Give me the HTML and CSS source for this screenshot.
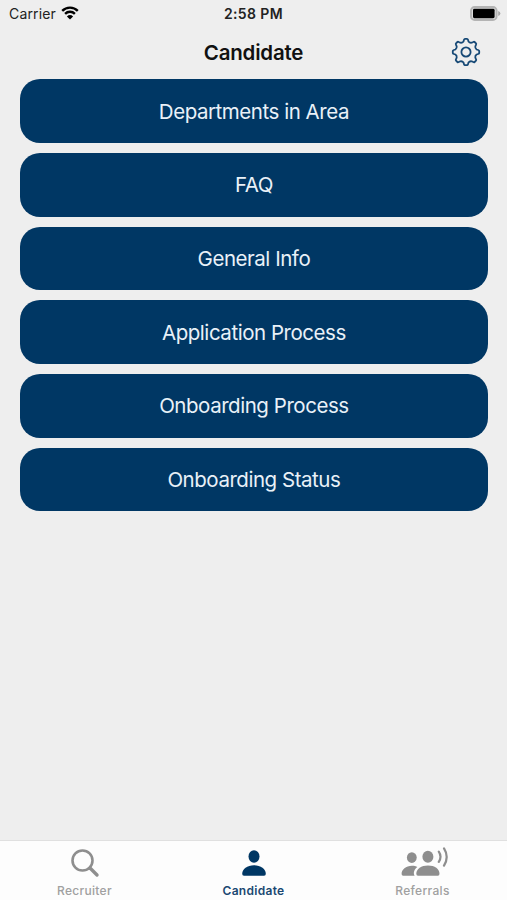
FILE: index.html
```html
<!DOCTYPE html>
<html lang="en">
<head>
  <meta charset="UTF-8">
  <title>Candidate</title>
  <link rel="stylesheet" href="styles.css">
</head>
<body>

  <div class="status-bar">
    <div class="carrier">
      <span>Carrier</span>
      <svg class="wifi" width="18" height="14" viewBox="0 0 18 14">
        <path d="M1.2 4.8a11.2 11.2 0 0 1 15.6 0M4.1 7.8a7 7 0 0 1 9.8 0" fill="none" stroke="#000" stroke-width="2.4"/>
        <path d="M9 13.6 5.9 10.4a4.5 4.5 0 0 1 6.2 0z"/>
      </svg>
    </div>
    <div class="time">2:58 PM</div>
    <svg class="battery" width="31" height="15" viewBox="0 0 31 15">
      <rect x="1" y="1" width="25.6" height="13" rx="3.6" fill="#ddd" stroke="#b4b4b4" stroke-width="1.9"/>
      <rect x="3" y="2.8" width="21.6" height="9.4" rx="1.4"/>
      <path d="M28.2 5v5q2.200-.8 2.200-2.500t-2.200-2.500z" fill="#a8a8a8"/>
    </svg>
  </div>

  <header class="nav-bar">
    <h1>Candidate</h1>
    <svg class="gear" width="30" height="30" viewBox="-15 -15 30 30">
      <path d="M-2.5-10.6L-2-12.2Q-1.7-13.2-1-13.2H1Q1.7-13.2 2-12.2L2.5-10.6Q3.7-8.9 5.7-9.3L7.2-10Q8.1-10.5 8.6-10L10-8.6Q10.5-8.1 10-7.2L9.3-5.7Q8.9-3.7 10.6-2.5L12.2-2Q13.2-1.7 13.2-1V1Q13.2 1.7 12.2 2L10.6 2.5Q8.9 3.7 9.3 5.7L10 7.2Q10.5 8.1 10 8.6L8.6 10Q8.1 10.5 7.2 10L5.7 9.3Q3.7 8.9 2.5 10.6L2 12.2Q1.7 13.2 1 13.2H-1Q-1.7 13.2-2 12.2L-2.5 10.6Q-3.7 8.9-5.7 9.3L-7.2 10Q-8.1 10.5-8.6 10L-10 8.6Q-10.5 8.1-10 7.2L-9.3 5.7Q-8.9 3.7-10.6 2.5L-12.2 2Q-13.2 1.7-13.2 1V-1Q-13.2-1.7-12.2-2L-10.6-2.5Q-8.9-3.7-9.3-5.7L-10-7.2Q-10.5-8.1-10-8.6L-8.6-10Q-8.1-10.5-7.2-10L-5.7-9.3Q-3.7-8.9-2.5-10.6Z"/>
      <circle r="4.6"/>
    </svg>
  </header>

  <main class="menu">
    <button class="menu-btn">Departments in Area</button>
    <button class="menu-btn">FAQ</button>
    <button class="menu-btn">General Info</button>
    <button class="menu-btn">Application Process</button>
    <button class="menu-btn">Onboarding Process</button>
    <button class="menu-btn">Onboarding Status</button>
  </main>

  <nav class="tab-bar">
    <div class="tab">
      <svg width="50" height="32" viewBox="0 0 50 32">
        <circle cx="22.5" cy="13.5" r="10" fill="none" stroke="#8e8e8e" stroke-width="2.6"/>
        <path d="M30 21l7 7" stroke="#8e8e8e" stroke-width="3.4" stroke-linecap="round"/>
      </svg>
      <span>Recruiter</span>
    </div>
    <div class="tab active">
      <svg width="50" height="32" viewBox="0 0 50 32">
        <ellipse cx="25" cy="9.5" rx="5.5" ry="6.2"/>
        <path d="M15 28.7q-1.8 0-1.8-2c0-4.8 5-8.5 11.8-8.5s11.8 3.7 11.8 8.5q0 2-1.8 2z"/>
      </svg>
      <span>Candidate</span>
    </div>
    <div class="tab">
      <svg width="50" height="32" viewBox="0 0 50 32">
        <ellipse cx="13.8" cy="10.6" rx="4.9" ry="5.3"/>
        <path d="M16.6 28.7H5.2q-1.6 0-1.6-1.8c0-4.4 4.3-8.2 10.3-8.2 2.4 0 4 .5 5.5 1.2-2.8 2-4.6 5.6-2.8 8.800z"/>
        <ellipse cx="29.900" cy="9.700" rx="5.500" ry="6"/>
        <path d="M20 28.700q-1.700 0-1.700-2c0-4.700 5-8.200 11.700-8.200s11.500 3.500 11.500 8.200q0 2-1.700 2z"/>
        <path d="M40.800 4.700q3.400 5 0 10.200M46 1.400q5.400 8.400 0 17.200" fill="none" stroke="#8e8e8e" stroke-width="2.200" stroke-linecap="round"/>
      </svg>
      <span>Referrals</span>
    </div>
  </nav>

</body>
</html>
```

FILE: styles.css
```css
* { box-sizing: border-box; margin: 0; padding: 0; }
body {
  display: flex;
  flex-direction: column;
  height: 100vh;
  overflow: hidden;
  background: #eee;
  font-family: Inter, "Liberation Sans", sans-serif;
}
.status-bar {
  display: grid;
  grid-template-columns: 1fr auto 1fr;
  align-items: center;
  height: 27px;
  padding: 0 6px 0 9px;
  font-size: 14px;
  color: #222;
}
.carrier {
  display: flex;
  align-items: center;
  gap: 5px;
  letter-spacing: 0.15px;
}
.wifi {
  margin-bottom: 2px;
}
.time {
  margin-right: 3px;
  font-weight: 600;
  letter-spacing: 0.4px;
}
.battery {
  justify-self: end;
}
.nav-bar {
  display: grid;
  grid-template-columns: 1fr auto 1fr;
  align-items: center;
  height: 52.2px;
  padding: 0 26px 2px;
}
.nav-bar h1 {
  grid-column: 2;
  font-size: 20.5px;
  font-weight: 600;
  letter-spacing: -0.2px;
  color: #111;
}
.gear {
  justify-self: end;
  fill: none;
  stroke: #174976;
  stroke-width: 1.8;
  stroke-linejoin: round;
}
.menu {
  flex: 1;
  display: flex;
  flex-direction: column;
  gap: 10px;
  padding: 0 19.5px 0 20.3px;
}
.menu-btn {
  height: 63.7px;
  border: 0;
  border-radius: 20px;
  background: #003764;
  color: #e9f1f8;
  font-family: inherit;
  font-size: 20.5px;
  letter-spacing: -0.46px;
}
.tab-bar {
  display: grid;
  grid-template-columns: repeat(3, 1fr);
  height: 60px;
  border-top: 1px solid #e0e0e0;
  background: #fdfdfd;
}
.tab {
  display: flex;
  flex-direction: column;
  align-items: center;
  padding-top: 6px;
  font-size: 12px;
  font-weight: 500;
  letter-spacing: 0.3px;
  color: #a0a0a0;
  fill: #8e8e8e;
}
.tab span {
  margin-top: 4px;
  line-height: 16px;
}
.tab.active {
  color: #1a4872;
  fill: #003764;
  font-weight: 600;
}
```
